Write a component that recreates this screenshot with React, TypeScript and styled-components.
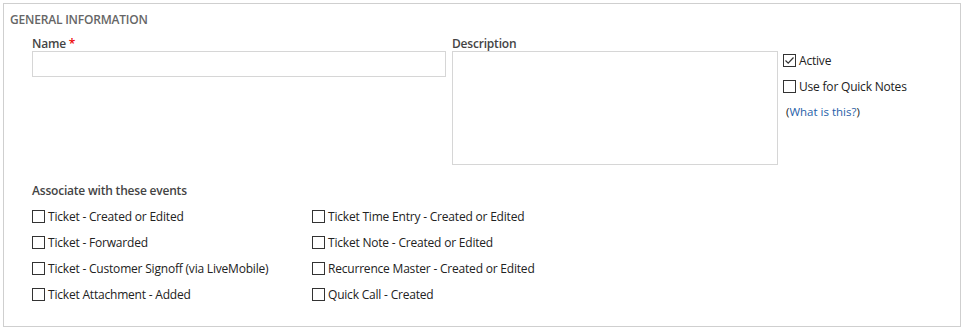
import styled, { createGlobalStyle } from 'styled-components';

const GlobalStyle = createGlobalStyle`
    body {
        margin: 0;
        background: #ffffff;
        font-family: "Open Sans", "Noto Sans", sans-serif;
    }
    #root {
        padding: 3px;
    }
`

const firstColumn = [
    'Ticket - Created or Edited',
    'Ticket - Forwarded',
    'Ticket - Customer Signoff (via LiveMobile)',
    'Ticket Attachment - Added',
]

const secondColumn = [
    'Ticket Time Entry - Created or Edited',
    'Ticket Note - Created or Edited',
    'Recurrence Master - Created or Edited',
    'Quick Call - Created',
]

function CheckItem({ label, checked }: { label: string; checked?: boolean }) {
    return (
        <CheckRow>
            <Box>
                {checked && (
                    <svg width="11" height="11" viewBox="0 0 11 11">
                        <path d="M1.5 5.5 L4.2 8.2 L9.5 2.5" fill="none" stroke="#333" strokeWidth="1.2" />
                    </svg>
                )}
            </Box>
            <CheckText>{label}</CheckText>
        </CheckRow>
    )
}

function App() {
    return (
        <>
            <GlobalStyle />
            <Panel>
                <Header>General Information</Header>
                <Body>
                    <TopRow>
                        <Field width={414} gap={6}>
                            <Label>Name <Required>*</Required></Label>
                            <TextInput />
                        </Field>
                        <Field width={326} gap={5}>
                            <Label>Description</Label>
                            <TextArea />
                        </Field>
                        <SideOptions>
                            <CheckItem label="Active" checked />
                            <CheckItem label="Use for Quick Notes" />
                            <Help>(<Link href="#">What is this?</Link>)</Help>
                        </SideOptions>
                    </TopRow>
                    <EventsLabel>Associate with these events</EventsLabel>
                    <EventGrid>
                        <EventColumn>
                            {firstColumn.map(item => <CheckItem key={item} label={item} />)}
                        </EventColumn>
                        <EventColumn>
                            {secondColumn.map(item => <CheckItem key={item} label={item} />)}
                        </EventColumn>
                    </EventGrid>
                </Body>
            </Panel>
        </>
    )
}

const Panel = styled.div`
    width: 956px;
    height: 322px;
    border: 1px solid #cfcfcf;
    background: #fff;
`

const Header = styled.div`
    padding: 9px 6px 0;
    height: 14px;
    font-size: 12px;
    font-weight: 600;
    line-height: 14px;
    color: #666;
    text-transform: uppercase;
    letter-spacing: -0.2px;
`

const Body = styled.div`
    padding: 10px 0 0 28px;
`

const TopRow = styled.div`
    display: flex;
    align-items: flex-start;
`

const Field = styled.div<{ width: number; gap: number }>`
    width: ${props => props.width}px;
    margin-right: ${props => props.gap}px;
    display: flex;
    flex-direction: column;
`

const Label = styled.div`
    font-size: 12px;
    font-weight: 600;
    color: #444;
    line-height: 14px;
    height: 14px;
    letter-spacing: -0.2px;
`

const Required = styled.span`
    color: #e00;
`

const TextInput = styled.div`
    height: 24px;
    border: 1px solid #d6d6d6;
`

const TextArea = styled.div`
    height: 112px;
    border: 1px solid #d6d6d6;
`

const SideOptions = styled.div`
    padding-top: 15px;
    display: flex;
    flex-direction: column;
    gap: 10px;
`

const CheckRow = styled.div`
    display: flex;
    align-items: center;
    height: 16px;
`

const Box = styled.span`
    width: 11px;
    height: 11px;
    border: 1px solid #333;
    display: flex;
    align-items: center;
    justify-content: center;
    margin-right: 3px;
    flex-shrink: 0;
`

const CheckText = styled.span`
    font-size: 12px;
    color: #222;
    letter-spacing: -0.2px;
    white-space: nowrap;
`

const Help = styled.div`
    padding-left: 3px;
    font-size: 11.5px;
    color: #222;
    line-height: 16px;
`

const Link = styled.a`
    color: #1f5ea8;
    text-decoration: none;
`

const EventsLabel = styled(Label)`
    margin-top: 19px;
`

const EventGrid = styled.div`
    display: grid;
    grid-template-columns: 280px 300px;
    margin-top: 10px;
`

const EventColumn = styled.div`
    display: flex;
    flex-direction: column;
    gap: 10px;
`

export default App;
